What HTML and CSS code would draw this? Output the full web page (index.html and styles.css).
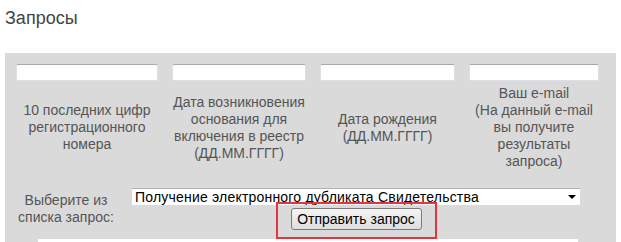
FILE: index.html
```html
<!DOCTYPE html>
<html lang="ru">
<head>
    <meta charset="UTF-8">
    <title>Запросы</title>
    <link rel="stylesheet" href="styles.css">
</head>
<body>
    <h1 class="page-title">Запросы</h1>

    <div class="panel">
        <div class="fields">
            <input type="text" class="field-input">
            <input type="text" class="field-input">
            <input type="text" class="field-input">
            <input type="text" class="field-input">

            <div class="field-label">10 последних цифр регистрационного номера</div>
            <div class="field-label">Дата возникновения основания для включения в реестр (ДД.ММ.ГГГГ)</div>
            <div class="field-label">Дата рождения (ДД.ММ.ГГГГ)</div>
            <div class="field-label">Ваш e-mail<br>(На данный e-mail вы получите результаты запроса)</div>
        </div>

        <div class="request-row">
            <div class="request-label">Выберите из списка запрос:</div>
            <div class="request-controls">
                <div class="select-wrap">
                    <select class="request-select">
                        <option>Получение электронного дубликата Свидетельства</option>
                    </select>
                </div>
                <span class="highlight">
                    <button class="send-button">Отправить запрос</button>
                </span>
            </div>
        </div>

        <div class="result-box"></div>
    </div>
</body>
</html>
```

FILE: styles.css
```css
body {
    margin: 0;
    padding: 0 5px;
    font-family: "Liberation Sans", Arial, sans-serif;
    background: #fff;
}
.page-title {
    margin: 0;
    padding-top: 8px;
    height: 53px;
    box-sizing: border-box;
    font-size: 18px;
    font-weight: normal;
    color: #444;
}
.panel {
    background-color: #dadada;
    padding: 11px 18px 10px 11px;
}
.fields {
    display: grid;
    grid-template-columns: 142px 134px 135px 130px;
    column-gap: 14px;
    align-items: center;
}
.field-input {
    height: 17px;
    box-sizing: border-box;
    margin: 0;
    border: 1px solid #dde0e6;
    border-top-color: #a8a8a8;
    border-radius: 2px;
    background: #fff;
}
.field-label {
    min-height: 87px;
    display: flex;
    align-items: center;
    justify-content: center;
    text-align: center;
    font-size: 14px;
    line-height: 17px;
    color: #555;
    padding-top: 3px;
}
.request-row {
    display: flex;
    align-items: center;
    margin-top: 17px;
}
.request-label {
    width: 100px;
    text-align: center;
    font-size: 14px;
    line-height: 17px;
    color: #555;
}
.request-controls {
    margin-left: 16px;
    width: 448px;
    display: flex;
    flex-direction: column;
    align-items: center;
    gap: 2px;
}
.select-wrap {
    position: relative;
    width: 100%;
}
.select-wrap::after {
    content: "";
    position: absolute;
    right: 4px;
    top: 7px;
    border-left: 4px solid transparent;
    border-right: 4px solid transparent;
    border-top: 4px solid #000;
    pointer-events: none;
}
.request-select {
    appearance: none;
    -webkit-appearance: none;
    width: 100%;
    height: 17px;
    margin: 0;
    padding: 0 0 0 3px;
    border: 0;
    border-top: 1px solid #b0b0b0;
    border-radius: 0;
    background: #fff;
    font-family: "Liberation Sans", Arial, sans-serif;
    font-size: 14px;
    letter-spacing: 0.2px;
    line-height: 16px;
    color: #000;
}
.highlight {
    position: relative;
    display: inline-block;
}
.highlight::after {
    content: "";
    position: absolute;
    top: -6px;
    left: -15px;
    right: -15px;
    bottom: -9px;
    border: 2px solid #e3343f;
    pointer-events: none;
}
.send-button {
    display: block;
    width: 131px;
    height: 22px;
    margin: 0;
    padding: 0;
    border: 1px solid #7a7a7a;
    border-radius: 3px;
    background: linear-gradient(#f4f4f4, #dedede);
    font-family: "Liberation Sans", Arial, sans-serif;
    font-size: 14px;
    color: #000;
}
.result-box {
    margin: 9px 0 0 22px;
    width: 540px;
    height: 30px;
    background: #fff;
}
```
